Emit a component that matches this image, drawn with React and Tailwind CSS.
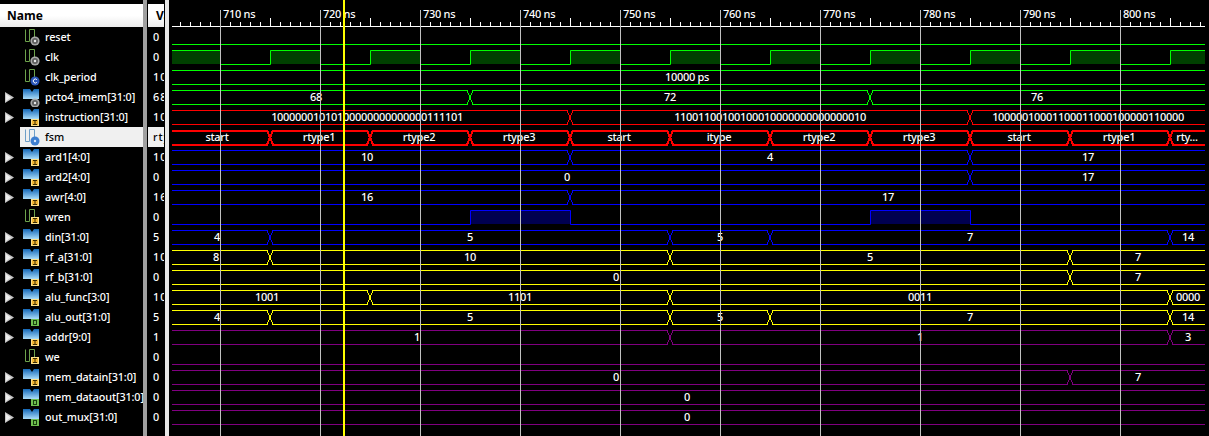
const signals = [
  { name: "reset", value: "0", kind: "bit", badge: "gear" },
  { name: "clk", value: "0", kind: "bit", badge: "gear" },
  { name: "clk_period", value: "10000 ps", kind: "bit", badge: "c" },
  { name: "pcto4_imem[31:0]", value: "68", kind: "bus", badge: "gear" },
  { name: "instruction[31:0]", value: "1000000", kind: "bus", badge: "i" },
  { name: "fsm", value: "rtype1", kind: "fsm", badge: "dot", selected: true },
  { name: "ard1[4:0]", value: "10", kind: "bus", badge: "i" },
  { name: "ard2[4:0]", value: "0", kind: "bus", badge: "i" },
  { name: "awr[4:0]", value: "16", kind: "bus", badge: "i" },
  { name: "wren", value: "0", kind: "bit", badge: "i" },
  { name: "din[31:0]", value: "5", kind: "bus", badge: "i" },
  { name: "rf_a[31:0]", value: "10", kind: "bus", badge: "i" },
  { name: "rf_b[31:0]", value: "0", kind: "bus", badge: "i" },
  { name: "alu_func[3:0]", value: "1001", kind: "bus", badge: "i" },
  { name: "alu_out[31:0]", value: "5", kind: "bus", badge: "o" },
  { name: "addr[9:0]", value: "1", kind: "bus", badge: "i" },
  { name: "we", value: "0", kind: "bit", badge: "i" },
  { name: "mem_datain[31:0]", value: "0", kind: "bus", badge: "i" },
  { name: "mem_dataout[31:0]", value: "0", kind: "bus", badge: "o" },
  { name: "out_mux[31:0]", value: "0", kind: "bus", badge: "o" },
];

// row index, colour, transition times and labels [x, text]
const buses = [
  { row: 2, color: "#00ff00", edges: [], labels: [[687, "10000 ps"]] },
  { row: 3, color: "#00ff00", edges: [470, 870], labels: [[316, "68"], [670, "72"], [1037, "76"]] },
  {
    row: 4,
    color: "#ff0000",
    edges: [570, 970],
    labels: [
      [367, "10000001010100000000000000111101"],
      [770, "11001100100100010000000000000010"],
      [1088, "10000010001100011000100000110000"],
    ],
  },
  {
    row: 5,
    color: "#ff0000",
    width: 2,
    edges: [270, 370, 470, 570, 670, 770, 870, 970, 1070, 1170],
    labels: [
      [217, "start"], [319, "rtype1"], [419, "rtype2"], [519, "rtype3"], [619, "start"],
      [719, "itype"], [819, "rtype2"], [919, "rtype3"], [1019, "start"], [1119, "rtype1"], [1187, "rty..."],
    ],
  },
  { row: 6, color: "#0000ff", edges: [570, 970], labels: [[367, "10"], [770, "4"], [1088, "17"]] },
  { row: 7, color: "#0000ff", edges: [970], labels: [[567, "0"], [1088, "17"]] },
  { row: 8, color: "#0000ff", edges: [570], labels: [[367, "16"], [888, "17"]] },
  { row: 10, color: "#0000ff", edges: [270, 670, 770, 1170], labels: [[217, "4"], [470, "5"], [720, "5"], [970, "7"], [1188, "14"]] },
  { row: 11, color: "#ffff00", edges: [270, 670, 1070], labels: [[216, "8"], [470, "10"], [870, "5"], [1138, "7"]] },
  { row: 12, color: "#ffff00", edges: [1070], labels: [[616, "0"], [1138, "7"]] },
  { row: 13, color: "#ffff00", edges: [370, 670, 1170], labels: [[267, "1001"], [520, "1101"], [920, "0011"], [1188, "0000"]] },
  { row: 14, color: "#ffff00", edges: [270, 670, 770, 1170], labels: [[217, "4"], [470, "5"], [720, "5"], [970, "7"], [1188, "14"]] },
  { row: 15, color: "#800080", edges: [670, 1170], labels: [[417, "1"], [920, "1"], [1188, "3"]] },
  { row: 17, color: "#800080", edges: [1070], labels: [[616, "0"], [1138, "7"]] },
  { row: 18, color: "#800080", edges: [], labels: [[687, "0"]] },
  { row: 19, color: "#800080", edges: [], labels: [[687, "0"]] },
];

const X0 = 172;
const X1 = 1205;
const hi = (row) => 30.5 + row * 20;
const lo = (row) => 44.5 + row * 20;

const busPath = (row, edges) => {
  let top = `M${X0} ${hi(row)}`;
  let bottom = `M${X0} ${lo(row)}`;
  edges.forEach((t) => {
    top += `L${t - 3} ${hi(row)}L${t + 3} ${lo(row)}L${t + 4} ${lo(row)}`;
    bottom += `L${t - 3} ${lo(row)}L${t + 3} ${hi(row)}L${t + 4} ${hi(row)}`;
    top += `M${t + 4} ${hi(row)}`;
    bottom += `M${t + 4} ${lo(row)}`;
  });
  return `${top}L${X1} ${hi(row)}${bottom}L${X1} ${lo(row)}`;
};

const gridTimes = [220, 320, 420, 520, 620, 720, 820, 920, 1020, 1120];

const clkPath = () => {
  let d = `M${X0} ${hi(1)}`;
  gridTimes.forEach((t) => {
    d += `L${t + 0.5} ${hi(1)}L${t + 0.5} ${lo(1)}L${t + 50.5} ${lo(1)}L${t + 50.5} ${hi(1)}`;
  });
  return `${d}L${X1} ${hi(1)}`;
};

const wrenPath = () => {
  const r = 9;
  return `M${X0} ${lo(r)}L470.5 ${lo(r)}L470.5 ${hi(r)}L570.5 ${hi(r)}L570.5 ${lo(r)}L870.5 ${lo(r)}L870.5 ${hi(r)}L970.5 ${hi(r)}L970.5 ${lo(r)}L${X1} ${lo(r)}`;
};

const Badge = ({ type, dy }) => {
  let mark;
  if (type === "i") {
    mark = (
      <g>
        <rect x="8" y="10" width="8" height="7" fill="#f2b632" />
        <rect x="8.5" y="10.5" width="7" height="6" fill="none" stroke="#fde08a" />
        <path d="M10 11.5h4M12 11.5v4M10 15.5h4" stroke="#3a2a00" fill="none" />
      </g>
    );
  } else if (type === "o") {
    mark = (
      <g>
        <rect x="8" y="10" width="8" height="7" fill="#6fbf4f" />
        <rect x="10.5" y="11.5" width="3" height="4" fill="none" stroke="#17400c" />
      </g>
    );
  } else if (type === "c") {
    mark = (
      <g>
        <circle cx="12" cy="14" r="4.5" fill="#2a55b8" />
        <path d="M13.8 12.7a2 2 0 1 0 0 2.6" stroke="#ffffff" fill="none" />
      </g>
    );
  } else if (type === "dot") {
    mark = (
      <g>
        <circle cx="12" cy="14" r="4.5" fill="#3f7fd0" />
        <circle cx="12" cy="14" r="1.2" fill="#d8e8ff" />
      </g>
    );
  } else {
    mark = (
      <g>
        <circle cx="12" cy="14" r="4.6" fill="#a8a8a8" />
        <circle cx="12" cy="14" r="3" fill="#5e5e5e" />
        <circle cx="12" cy="14" r="1.2" fill="#e8e8e8" />
      </g>
    );
  }
  return <g transform={`translate(0 ${dy})`}>{mark}</g>;
};

const SignalIcon = ({ kind, badge }) => (
  <svg width="18" height="19" viewBox="0 0 18 19" className="shrink-0 mt-[2px]">
    <defs>
      <linearGradient id="busFill" x1="0" y1="0" x2="0" y2="1">
        <stop offset="0" stopColor="#1468b8" />
        <stop offset="1" stopColor="#a9dcfa" />
      </linearGradient>
    </defs>
    {kind === "bus" ? (
      <path d="M0 0h7l2 3 2-3h5v10H0z" fill="url(#busFill)" />
    ) : (
      <path
        d="M2.5 0.5v12h4V0.5h5v9"
        fill="none"
        stroke={kind === "fsm" ? "#6f9fc8" : "#6da24c"}
      />
    )}
    <Badge type={badge} dy={kind === "bus" ? 0 : -2} />
  </svg>
);

const Triangle = () => (
  <svg width="10" height="11" viewBox="0 0 10 11" className="shrink-0">
    <path d="M0 0l9 5.5-9 5.5z" fill="#c4c4c4" />
    <path d="M1 2l5 3.5-5 3.5z" fill="#ececec" />
  </svg>
);

const Ruler = () => {
  const ticks = [];
  for (let x = 180; x < X1; x += 10) {
    const top = x % 100 === 20 ? 10 : x % 50 === 20 ? 18 : 22;
    ticks.push(<line key={x} x1={x + 0.5} x2={x + 0.5} y1={top} y2={26} stroke="#ffffff" />);
  }
  return (
    <g>
      <line x1={X0} x2={X1} y1={26.5} y2={26.5} stroke="#ffffff" />
      {ticks}
    </g>
  );
};

const Waves = () => (
  <svg width="1209" height="436" viewBox="0 0 1209 436" className="absolute left-0 top-0 font-['Noto_Sans',sans-serif] font-medium text-[11px] tracking-[-0.3px]">
    <Ruler />
    <line x1={X0} x2={X1} y1={lo(0)} y2={lo(0)} stroke="#00ff00" />
    {gridTimes.slice(1).map((t) => (
      <rect key={t} x={t - 50} y={50} width={50} height={14} fill="#004000" />
    ))}
    <rect x={X0} y={50} width={48} height={14} fill="#004000" />
    <rect x={1170} y={50} width={35} height={14} fill="#004000" />
    <path d={clkPath()} fill="none" stroke="#00ff00" />
    <rect x={470} y={210} width={100} height={14} fill="#000050" />
    <rect x={870} y={210} width={100} height={14} fill="#000050" />
    <path d={wrenPath()} fill="none" stroke="#0000ff" />
    <line x1={X0} x2={X1} y1={lo(16)} y2={lo(16)} stroke="#800080" />
    {buses.map((b) => (
      <path
        key={b.row}
        d={busPath(b.row, b.edges)}
        fill="none"
        stroke={b.color}
        strokeWidth={b.width || 1}
        shapeRendering="crispEdges"
      />
    ))}
    {buses.map((b) =>
      b.labels.map(([x, text]) => (
        <text key={b.row + "-" + x} x={x} y={41 + b.row * 20} textAnchor="middle" fill="#ffffff">
          {text}
        </text>
      ))
    )}
    {gridTimes.map((t, i) => (
      <g key={t}>
        <line x1={t + 0.5} x2={t + 0.5} y1={10} y2={436} stroke="#c0c0c0" />
        <text x={t + 3} y={18} fill="#ffffff">
          {710 + i * 10} ns
        </text>
      </g>
    ))}
    <rect x={343} y={0} width={2} height={436} fill="#ffff00" />
  </svg>
);

const HeaderCell = ({ className, children }) => (
  <div className={`h-[23px] mt-[4px] flex items-center bg-linear-to-b from-white via-white to-[#ececec] text-[12px] font-bold text-black overflow-hidden ${className}`}>
    {children}
  </div>
);

export default function App() {
  return (
    <div className="relative w-[1209px] h-[436px] bg-black flex overflow-hidden font-['Noto_Sans',sans-serif] text-[10.8px] font-medium text-white">
      <div className="w-[143px] shrink-0">
        <HeaderCell className="pl-[7px]">Name</HeaderCell>
        {signals.map((s) => (
          <div key={s.name} className="h-5 flex items-center">
            <div className="w-[20px] shrink-0 pl-[5px] flex">{s.kind === "bus" && <Triangle />}</div>
            <div className={`flex-1 h-full flex items-center pl-[3px] overflow-hidden ${s.selected ? "bg-[#f0f0f0] text-black" : ""}`}>
              <div className="shrink-0 w-[22px] flex">
                <SignalIcon kind={s.kind} badge={s.badge} />
              </div>
              <span className="whitespace-nowrap tracking-[-0.1px]">{s.name}</span>
            </div>
          </div>
        ))}
      </div>
      <div className="w-[4px] shrink-0 bg-[#a0a0a0]" />
      <div className="w-[1px] shrink-0" />
      <div className="w-[16px] shrink-0 overflow-hidden">
        <HeaderCell className="pl-[8px]">Value</HeaderCell>
        {signals.map((s) => (
          <div
            key={s.name}
            className={`h-5 flex items-center pl-[5px] whitespace-nowrap tracking-[1px] overflow-hidden ${s.selected ? "bg-[#f0f0f0] text-black" : ""}`}
          >
            {s.value}
          </div>
        ))}
      </div>
      <div className="w-[1px] shrink-0" />
      <div className="w-[4px] shrink-0 bg-[#e8e8e8]" />
      <Waves />
    </div>
  );
}
